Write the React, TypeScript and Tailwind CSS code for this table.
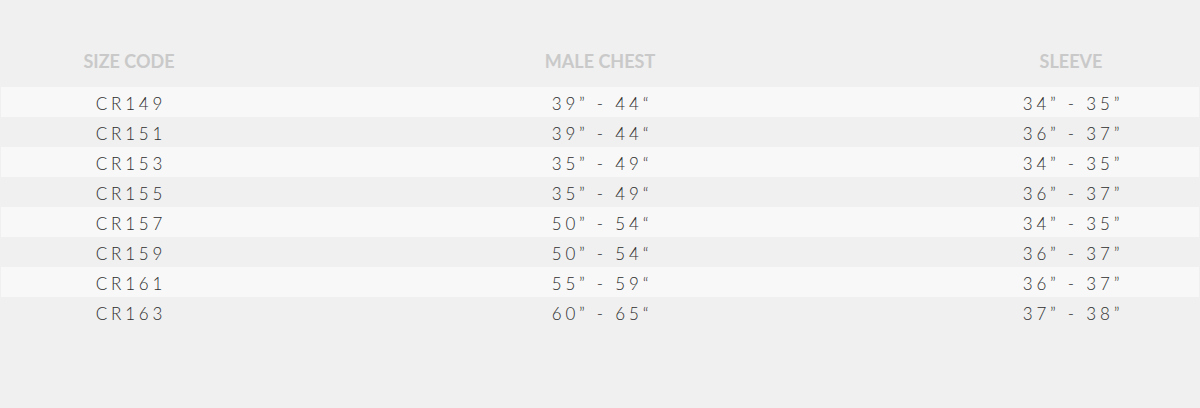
import React from "react";

const rows = [
  ["CR149", "39” - 44“", "34” - 35”"],
  ["CR151", "39” - 44“", "36” - 37”"],
  ["CR153", "35” - 49“", "34” - 35”"],
  ["CR155", "35” - 49“", "36” - 37”"],
  ["CR157", "50” - 54“", "34” - 35”"],
  ["CR159", "50” - 54“", "36” - 37”"],
  ["CR161", "55” - 59“", "36” - 37”"],
  ["CR163", "60” - 65“", "37” - 38”"],
];

export default function App() {
  return (
    <div
      className="w-[1200px] h-[408px] bg-[#f0f0f0] px-px"
      style={{ fontFamily: "Lato, 'Open Sans', sans-serif" }}
    >
      <div className="grid grid-cols-[256px_1fr_256px] h-[87px] pt-[48px] leading-[26px] text-[18px] font-bold text-[#c9c9c9]">
        <div className="text-center">SIZE CODE</div>
        <div className="text-center">MALE CHEST</div>
        <div className="text-center">SLEEVE</div>
      </div>
      <div className="flex flex-col">
        {rows.map((r, i) => (
          <div
            key={r[0]}
            className={`grid grid-cols-[256px_1fr_256px] h-[30px] items-center text-[17px] font-light tracking-[3.8px] text-[#2e2e2e] ${
              i % 2 === 0 ? "bg-[#f8f8f8]" : ""
            }`}
          >
            {r.map((c, j) => (
              <div key={j} className="text-center pt-[3px] pl-[4px] whitespace-pre">
                {c}
              </div>
            ))}
          </div>
        ))}
      </div>
    </div>
  );
}
